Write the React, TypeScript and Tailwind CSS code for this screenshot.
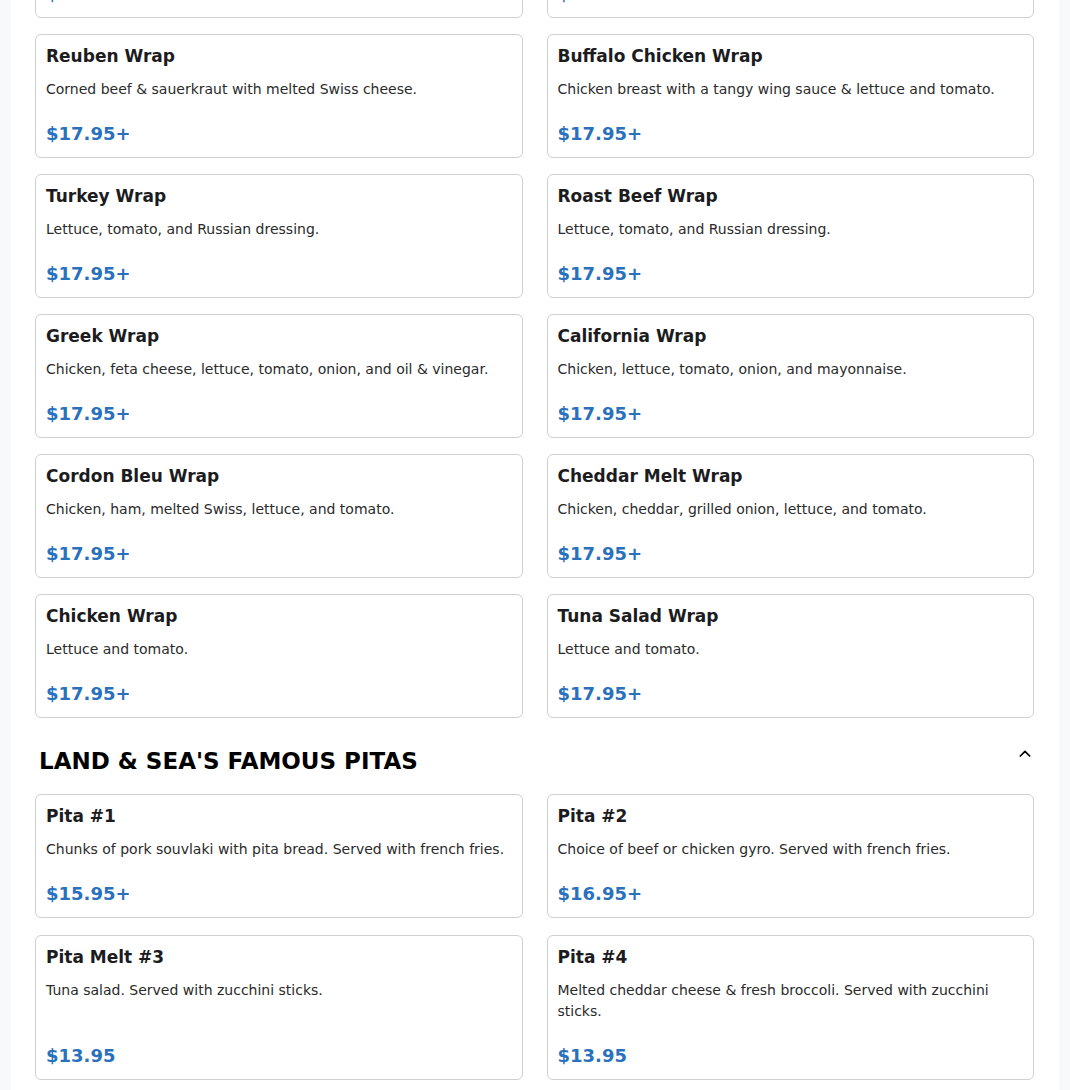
const font = { fontFamily: '"DejaVu Sans", sans-serif' }

const wraps = [
	{ name: "Chicken Caesar Wrap", desc: "Romaine lettuce, parmesan cheese, and Caesar dressing.", price: "$17.95+" },
	{ name: "Chicken Bacon Ranch Wrap", desc: "Chicken, bacon, lettuce, tomato, and ranch dressing.", price: "$17.95+" },
	{ name: "Reuben Wrap", desc: "Corned beef & sauerkraut with melted Swiss cheese.", price: "$17.95+" },
	{ name: "Buffalo Chicken Wrap", desc: "Chicken breast with a tangy wing sauce & lettuce and tomato.", price: "$17.95+" },
	{ name: "Turkey Wrap", desc: "Lettuce, tomato, and Russian dressing.", price: "$17.95+" },
	{ name: "Roast Beef Wrap", desc: "Lettuce, tomato, and Russian dressing.", price: "$17.95+" },
	{ name: "Greek Wrap", desc: "Chicken, feta cheese, lettuce, tomato, onion, and oil & vinegar.", price: "$17.95+" },
	{ name: "California Wrap", desc: "Chicken, lettuce, tomato, onion, and mayonnaise.", price: "$17.95+" },
	{ name: "Cordon Bleu Wrap", desc: "Chicken, ham, melted Swiss, lettuce, and tomato.", price: "$17.95+" },
	{ name: "Cheddar Melt Wrap", desc: "Chicken, cheddar, grilled onion, lettuce, and tomato.", price: "$17.95+" },
	{ name: "Chicken Wrap", desc: "Lettuce and tomato.", price: "$17.95+" },
	{ name: "Tuna Salad Wrap", desc: "Lettuce and tomato.", price: "$17.95+" },
]

const pitas = [
	{ name: "Pita #1", desc: "Chunks of pork souvlaki with pita bread. Served with french fries.", price: "$15.95+" },
	{ name: "Pita #2", desc: "Choice of beef or chicken gyro. Served with french fries.", price: "$16.95+" },
	{ name: "Pita Melt #3", desc: "Tuna salad. Served with zucchini sticks.", price: "$13.95" },
	{ name: "Pita #4", desc: "Melted cheddar cheese & fresh broccoli. Served with zucchini sticks.", price: "$13.95" },
]

type Item = { name: string; desc: string; price: string }

const MenuCard = ({ item }: { item: Item }) => (
	<div className="flex flex-col rounded-md border border-[#d0d0d0] bg-white px-[10px] pt-[9px] pb-[10px]">
		<h3 className="text-[17px] leading-[24px] font-bold text-[#1c1c1e]">{item.name}</h3>
		<p className="mt-[11px] text-[14px] leading-[21px] text-[#2a2a2a]">{item.desc}</p>
		<div className="mt-auto pt-5 text-[18px] leading-[27px] font-bold text-[#2a71bd]">{item.price}</div>
	</div>
)

const App = () => {
	return (
		<div className="h-[1090px] overflow-hidden bg-[#f8f9fa]" style={font}>
			<div className="mx-[11px] min-h-[1200px] bg-white pl-6 pr-[25px] pb-10">
				<div className="-mt-[106px]">
					{/* Wraps */}
					<div className="grid grid-cols-2 gap-x-6 gap-y-4">
						{wraps.map((w, i) => <MenuCard item={w} key={i} />)}
					</div>

					{/* Pitas */}
					<div className="mt-[27px] mb-[17px] flex items-center justify-between pl-1">
						<h2 className="text-[23px] leading-[32px] font-bold text-black">LAND &amp; SEA'S FAMOUS PITAS</h2>
						<svg className="mb-[14px] mr-[1px]" width="16" height="16" viewBox="0 0 24 24" fill="none" stroke="black" strokeWidth="2.6" strokeLinecap="round" strokeLinejoin="round">
							<path d="M5 15l7-7 7 7" />
						</svg>
					</div>
					<div className="grid grid-cols-2 gap-x-6 gap-y-[17px]">
						{pitas.map((p, i) => <MenuCard item={p} key={i} />)}
					</div>
				</div>
			</div>
		</div>
	)
}

export default App
